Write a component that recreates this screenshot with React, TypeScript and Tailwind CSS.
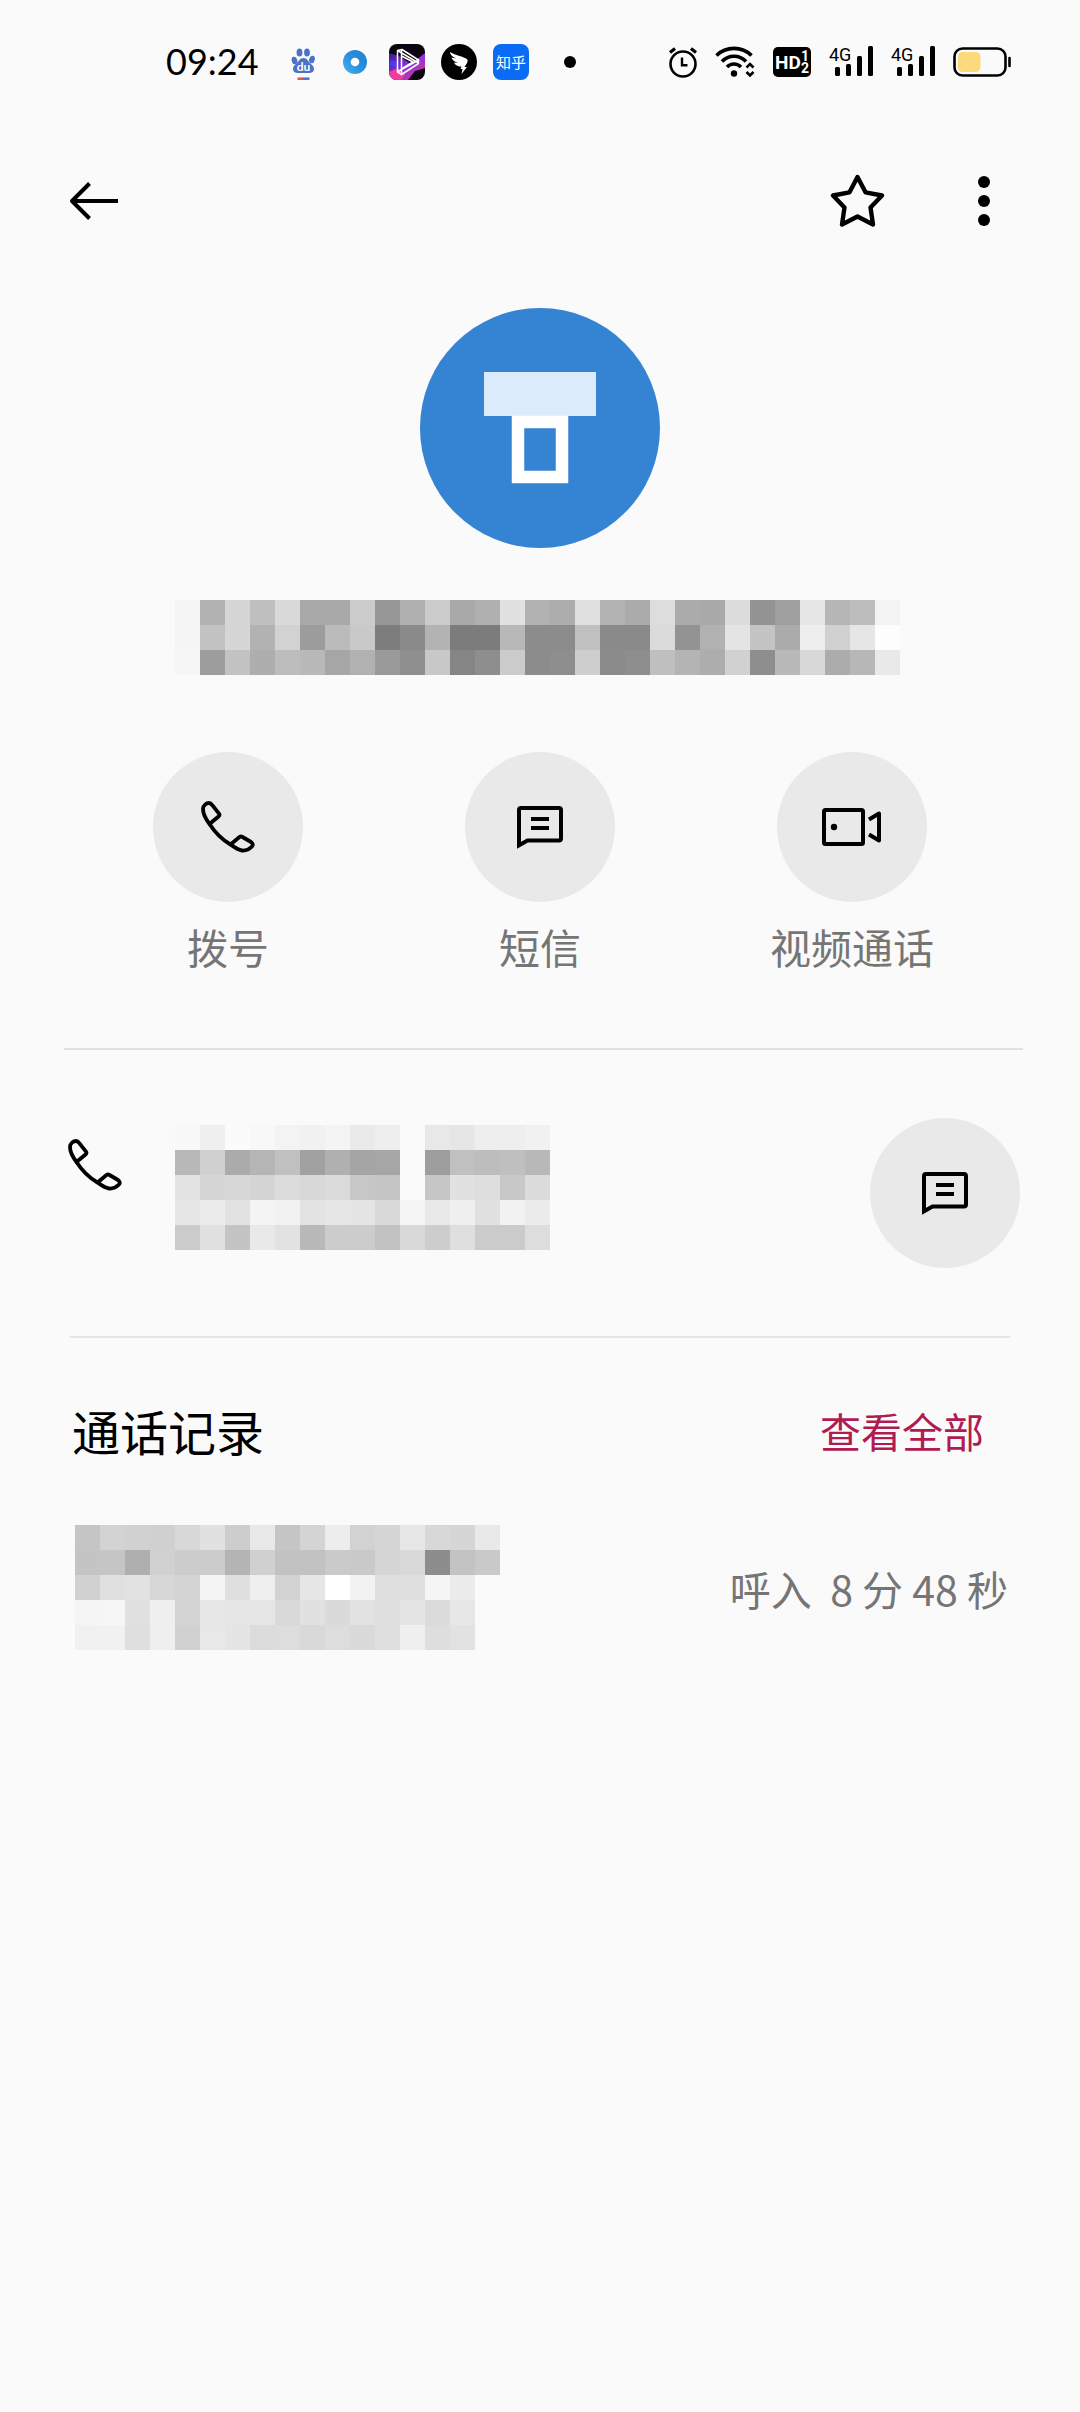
import React from 'react';

// Grey levels of the masked blocks, one two-digit hex value per cell
const NAME_MASK = [
  'f5 b2 d6 bf d9 a9 a9 cc 97 b0 cb a9 b0 e1 b2 ad e0 b3 ab dd ab a9 dc 93 9f e6 b6 bd f4',
  'f5 c2 d6 b2 d2 9c bb c9 7d 8a b3 7c 7c b8 8c 8c c0 8a 8a db 93 b1 e4 c4 ab ee d1 e6 fd',
  'f6 9d c2 ae bd b9 a6 b1 9a 8f c8 85 8e cb 8c 8e ce 8b 8e bf b4 ad d1 8e b9 d8 ac b7 e9',
];

const NUMBER_MASK = [
  'f8 ef fb f8 f3 f1 f4 ea ee fa e8 e6 ee ee f1',
  'b8 d0 ab b5 c0 a1 b0 a5 a6 fa 9e c0 bd bf b8',
  'e3 d5 d7 d4 dc d8 db c7 c5 fa c6 e1 de c8 db',
  'e6 eb e2 f4 f2 e3 e6 e5 da f5 e9 ef e1 f2 ec',
  'cb e1 c4 e9 e2 b9 cc cc c2 d9 cd df cb cb dd',
];

const RECORD_MASK = [
  'c5 d3 d1 d0 d8 e1 cd e8 c5 d4 ed d2 d5 e7 d8 d6 e9',
  'c4 c5 af d1 cc cc b4 d0 c2 c2 ca c9 d5 d9 8d c3 c9',
  'd1 e0 e2 d7 d4 f4 df ef d2 e6 ff f2 df df f5 eb fa',
  'f5 f6 e1 ef d4 e7 e6 e6 d9 e1 da e2 df e4 db e7 fa',
  'f1 f1 df ef d1 e8 e5 dc dd d9 dd da df ef de e2 fa',
];

const Mosaic: React.FC<{ rows: string[] }> = ({ rows }) => (
  <div aria-hidden="true">
    {rows.map((row, y) => (
      <div key={y} className="flex">
        {row.split(' ').map((v, x) => (
          <div key={x} className="size-[25px] shrink-0" style={{ backgroundColor: `#${v}${v}${v}` }} />
        ))}
      </div>
    ))}
  </div>
);

const PhoneIcon = () => (
  <svg width="54" height="52" viewBox="0 0 54 52" fill="none" stroke="#000" strokeWidth="3.8" strokeLinejoin="round">
    <path d="M8.5 23C4 17 2 12 2 8C2 4.5 5.5 2 8 2C9.5 2 10.5 3 11.5 4.3L18 12.6Q19 14 17.8 15.3Z" />
    <path d="M8.5 23C13 30 20 38 29.5 43.5" />
    <path d="M29.5 43.5L38.5 36Q40 35 41.5 36L50 41Q53 43.5 51 45.5C48 48.5 45 50 41 49.5C37 49 33 46 29.5 43.5Z" />
  </svg>
);

const MessageIcon = () => (
  <svg width="46" height="43" viewBox="0 0 46 43" fill="none" stroke="#000" strokeWidth="4">
    <path d="M2 39.3V4Q2 2 4 2H42Q44 2 44 4V32.5Q44 34.5 42 34.5H10.5Z" />
    <path d="M14 13H32M14 22H32" />
  </svg>
);

const VideoIcon = () => (
  <svg width="60" height="38" viewBox="0 0 60 38" fill="none" stroke="#000" strokeWidth="4">
    <rect x="2" y="2" width="39" height="34" rx="1.5" />
    <circle cx="12" cy="19" r="3.2" fill="#000" stroke="none" />
    <path d="M47 11.5L57 5.5V32.5L47 26.5" strokeLinejoin="round" />
  </svg>
);

const SignalIcon = () => (
  <svg width="44" height="40" viewBox="0 0 44 40">
    <text x="0" y="19" fontSize="18" fontFamily="Roboto, sans-serif">4G</text>
    <rect x="6" y="25" width="5" height="9" rx="1.5" />
    <rect x="17" y="22" width="5" height="12" rx="1.5" />
    <rect x="28" y="14" width="5" height="20" rx="1.5" />
    <rect x="39" y="4" width="5" height="30" rx="1.5" />
  </svg>
);

const StatusBar = () => (
  <div className="flex h-[124px] items-center justify-between pl-[166px] pr-[69px]">
    <div className="flex items-center">
      <span className="w-[119px] pb-[2px] font-[Lato,sans-serif] text-[36px] leading-[40px]">09:24</span>
      <div className="flex items-center gap-4">
        <svg width="36" height="36" viewBox="0 0 36 36" fill="#4a72c8">
          <ellipse cx="9.5" cy="16.5" rx="2.8" ry="3.8" transform="rotate(-15 9.5 16.5)" />
          <ellipse cx="14.5" cy="8.5" rx="2.9" ry="4" />
          <ellipse cx="22" cy="8.5" rx="2.9" ry="4" />
          <ellipse cx="27" cy="15.5" rx="2.8" ry="3.8" transform="rotate(15 27 15.5)" />
          <path d="M18.5 14C15 14 14 17 12 19C9.500 21 8 22.500 8 25C8 28 10.500 29 13 29H24C27 29 29 27.500 29 25C29 22 26.500 20.500 25 19C23 17 22 14 18.500 14Z" />
          <text x="18.5" y="26.5" fontSize="12" fontFamily="Lato, sans-serif" fontWeight="700" fill="#fff" textAnchor="middle">du</text>
          <path d="M12.5 34.700H19" stroke="#d95555" strokeWidth="2.5" />
          <path d="M18.5 34.700H24.500" stroke="#4a72c8" strokeWidth="2.5" />
        </svg>
        <svg width="36" height="36" viewBox="0 0 36 36">
          <defs>
            <linearGradient id="ring" x1="0" y1="1" x2="1" y2="0">
              <stop offset="0" stopColor="#45b4ee" />
              <stop offset="0.5" stopColor="#2a8fdc" />
              <stop offset="1" stopColor="#1f7fd0" />
            </linearGradient>
          </defs>
          <circle cx="18" cy="18" r="12" fill="url(#ring)" />
          <circle cx="18" cy="18" r="4.3" fill="#fff" />
        </svg>
        <svg width="36" height="36" viewBox="0 0 36 36">
          <defs>
            <clipPath id="tile"><rect width="36" height="36" rx="8" /></clipPath>
            <linearGradient id="neon" x1="0" y1="0" x2="1" y2="1">
              <stop offset="0" stopColor="#3a1a8c" />
              <stop offset="0.5" stopColor="#8a35e0" />
              <stop offset="1" stopColor="#f0307c" />
            </linearGradient>
          </defs>
          <g clipPath="url(#tile)">
            <rect width="36" height="36" fill="#0b0512" />
            <path d="M0 9L10 12L22 20L36 9V24L26 27L19 36H0Z" fill="url(#neon)" />
            <path d="M0 28L9 24L16 31L12 36H0Z" fill="#f03ca0" />
            <path d="M2 16L10 19L8 23L0 21Z" fill="#4b3cf0" />
          </g>
          <g fill="none" stroke="#fff" strokeWidth="1.5" strokeLinejoin="round">
            <path d="M8.500 6.500L13 5.500L29.500 16V19.500L12.500 30.500L8.500 28Z" />
            <path d="M12.500 6V30.500M8.500 6.500L29.500 19M29.500 16L9 27.500M12.500 12L24 18L12.500 25" />
          </g>
        </svg>
        <svg width="36" height="36" viewBox="0 0 36 36">
          <circle cx="18" cy="18" r="18" fill="#000" />
          <path d="M9 8C14 11 20 12 25 14.500C27 15.500 27 17 26 19L23.500 23H26L20.500 30L21.500 25H19.500L20.500 22.500C16 22.500 14 20.500 13 18.500L17 19C13 17.500 11 15.500 10.500 13.500L15 14.500C11 12.500 9 10.500 9 8Z" fill="#fff" />
        </svg>
        <span className="flex size-9 items-center justify-center rounded-lg bg-[#0a6cf5] text-[15px] leading-5 text-white">
          知乎
        </span>
        <span className="flex w-[50px] justify-center">
          <span className="size-3 rounded-full bg-black" />
        </span>
      </div>
    </div>

    <div className="flex items-center gap-[18px]">
      <svg width="28" height="32" viewBox="0 0 28 32" fill="none" stroke="#000" strokeWidth="2.6">
        <circle cx="14" cy="18" r="12.5" />
        <path d="M13 11.500V19.200H18.500" strokeWidth="2.4" />
        <path d="M1 6.500L6 2.500M22 2.500L27 6.500" strokeWidth="3.2" />
      </svg>
      <svg width="40" height="32" viewBox="0 0 40 32" fill="none" stroke="#000" strokeWidth="3.6">
        <path d="M1.500 9.500C11 0 27 0 36.500 9.500" />
        <path d="M7 15.500C13.500 8.500 24.500 8.500 31 15.500" />
        <path d="M12 21C16 17 22 17 26 21" />
        <circle cx="19" cy="27.5" r="3.2" fill="#000" stroke="none" />
        <path d="M31.500 21.500L35 18L38.500 21.500M31.500 26L35 29.500L38.500 26" strokeWidth="2.6" />
      </svg>
      <svg width="38" height="30" viewBox="0 0 38 30" fontFamily="Roboto, sans-serif" fontWeight="700" fill="#fff">
        <rect width="38" height="30" rx="5" fill="#000" />
        <text x="2" y="22" fontSize="19">HD</text>
        <text x="28" y="14" fontSize="14">1</text>
        <text x="28" y="26" fontSize="14">2</text>
      </svg>
      <SignalIcon />
      <SignalIcon />
      <svg width="58" height="30" viewBox="0 0 58 30">
        <rect x="1.5" y="1.5" width="51" height="27" rx="8" fill="none" stroke="#000" strokeWidth="2.6" />
        <rect x="5" y="5" width="22.5" height="20" rx="4.5" fill="#fada7c" />
        <path d="M56.500 11V19" stroke="#000" strokeWidth="2.6" strokeLinecap="round" />
      </svg>
    </div>
  </div>
);

const Header = () => (
  <header className="flex h-[154px] items-center justify-between pl-[69px] pr-[90px]">
    <button type="button" aria-label="返回">
      <svg width="50" height="38" viewBox="0 0 50 38" fill="none" stroke="#000" strokeWidth="4">
        <path d="M20.500 1.500L3 19L20.500 36.500M3 19H49" strokeLinejoin="round" />
      </svg>
    </button>
    <div className="flex items-center gap-[93px]">
      <button type="button" aria-label="收藏">
        <svg width="55" height="54" viewBox="0 0 55 54" fill="none" stroke="#000" strokeWidth="4.4" strokeLinejoin="round">
          <path d="M27.500 3L35.500 18.300L52 21.500L40.500 33.500L43 50.500L27.500 42.500L12 50.500L14.500 33.500L3 21.500L19.500 18.300Z" />
        </svg>
      </button>
      <button type="button" aria-label="更多">
        <svg width="12" height="50" viewBox="0 0 12 50">
          <circle cx="6" cy="6" r="6" />
          <circle cx="6" cy="25" r="6" />
          <circle cx="6" cy="44" r="6" />
        </svg>
      </button>
    </div>
  </header>
);

const ACTIONS = [
  { label: '拨号', icon: <PhoneIcon /> },
  { label: '短信', icon: <MessageIcon /> },
  { label: '视频通话', icon: <VideoIcon /> },
];

const App: React.FC = () => {
  return (
    <main className="min-h-screen bg-[#fafafa] font-['Noto_Sans_CJK_SC',sans-serif] text-black">
      <StatusBar />
      <Header />

      <section className="pt-[30px]">
        <svg className="mx-auto block" width="240" height="240" viewBox="0 0 240 240">
          <circle cx="120" cy="120" r="120" fill="#3583d3" />
          <rect x="64" y="64" width="112" height="44" fill="#dcebfb" />
          <rect x="98" y="114" width="44" height="55" fill="none" stroke="#fff" strokeWidth="12.5" />
        </svg>
        <div className="pl-[175px] pt-[52px]">
          <Mosaic rows={NAME_MASK} />
        </div>
      </section>

      <nav className="grid grid-cols-3 px-[72px] pt-[77px]">
        {ACTIONS.map(({ label, icon }) => (
          <button key={label} type="button" className="flex flex-col items-center gap-[14px] text-[41px] leading-[60px] text-[#757575]">
            <span className="flex size-[150px] items-center justify-center rounded-full bg-[#e9e9e9]">{icon}</span>
            {label}
          </button>
        ))}
      </nav>

      <hr className="ml-[64px] mr-[57px] mt-[72px] border-t-2 border-[#e0e0e0]" />

      <section className="flex items-start pl-[68px] pr-[60px] pt-[68px]">
        <div className="flex flex-1 items-start gap-[53px] pt-[7px]">
          <div className="pt-[14px]">
            <PhoneIcon />
          </div>
          <Mosaic rows={NUMBER_MASK} />
        </div>
        <button type="button" aria-label="短信" className="flex size-[150px] items-center justify-center rounded-full bg-[#e9e9e9]">
          <MessageIcon />
        </button>
      </section>

      <hr className="mx-[70px] mt-[68px] border-t-2 border-[#e4e4e4]" />

      <section className="pl-[72px] pr-[72px] pt-[56px]">
        <div className="flex h-[72px] items-center justify-between pr-[24px]">
          <h2 className="text-[48px] leading-[72px]">通话记录</h2>
          <a href="#all" className="text-[41px] leading-[60px] text-[#b01c52]">查看全部</a>
        </div>
        <div className="flex items-center justify-between pl-[3px] pt-[59px]">
          <Mosaic rows={RECORD_MASK} />
          <p className="whitespace-pre text-[41px] leading-[60px] text-[#757575]">呼入  8 分 48 秒</p>
        </div>
      </section>
    </main>
  );
};

export default App;
